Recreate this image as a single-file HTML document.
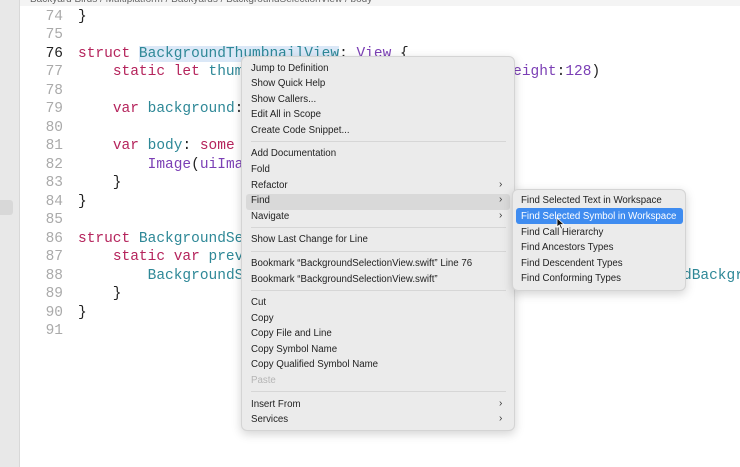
<!DOCTYPE html>
<html><head><meta charset="utf-8"><style>
*{margin:0;padding:0;box-sizing:border-box}
body{width:740px;height:467px;overflow:hidden;background:#fff;position:relative;font-family:"Liberation Sans",sans-serif}
.side{position:absolute;left:0;top:0;width:20px;height:467px;background:#e8e8e8;border-right:1px solid #d8d8d8}
.top{position:absolute;left:0;top:0;width:740px;height:6px;background:#f4f4f4;overflow:hidden}
.top span{position:absolute;top:-6px;font-size:10px;color:#666}
.ln{position:absolute;left:20px;width:43px;text-align:right;font-family:"Liberation Mono",monospace;font-size:14.5px;color:#aaa}
.cd{position:absolute;left:78px;font-family:"Liberation Mono",monospace;font-size:14.5px;color:#222;white-space:pre}
.k{color:#b5245c}.t{color:#2e8897}.p{color:#7b3fb5}
.sel{background:#dbe8f7}
.menu{position:absolute;background:#ebebeb;border:1px solid #d4d4d4;border-radius:6px;box-shadow:0 3px 10px rgba(0,0,0,.18)}
.mi{position:absolute;font-size:9.7px;color:#222;white-space:nowrap;line-height:14px}
.ar{position:absolute;font-size:10px;color:#333}
.sep{position:absolute;height:1px;background:#d6d6d6}
</style></head><body>
<div class="top"><span style="left:30px">Backyard Birds / Multiplatform / Backyards / BackgroundSelectionView / body</span></div>
<div class="side"><div style="position:absolute;left:0;top:200px;width:13px;height:15px;background:#d8d8d8;border-radius:0 3px 3px 0"></div></div>

<div class="ln" style="top:9px">74</div><div class="cd" style="top:9px">}</div>
<div class="ln" style="top:27px">75</div>
<div class="ln" style="top:46px;color:#222">76</div><div class="cd" style="top:46px"><span class="k">struct</span> <span class="t sel">BackgroundThumbnailView</span>: <span class="p">View</span> {</div>
<div class="ln" style="top:64px">77</div><div class="cd" style="top:64px">    <span class="k">static let</span> <span class="t">thumbnailSize</span> = <span class="p">CGSize</span>(<span class="p">width</span>:<span class="p">128</span>, <span class="p">height</span>:<span class="p">128</span>)</div>
<div class="ln" style="top:83px">78</div>
<div class="ln" style="top:101px">79</div><div class="cd" style="top:101px">    <span class="k">var</span> <span class="t">background</span>: <span class="p">BackyardBackground</span></div>
<div class="ln" style="top:120px">80</div>
<div class="ln" style="top:138px">81</div><div class="cd" style="top:138px">    <span class="k">var</span> <span class="t">body</span>: <span class="k">some</span> <span class="p">View</span> {</div>
<div class="ln" style="top:157px">82</div><div class="cd" style="top:157px">        <span class="p">Image</span>(<span class="p">uiImage</span>: background)</div>
<div class="ln" style="top:175px">83</div><div class="cd" style="top:175px">    }</div>
<div class="ln" style="top:194px">84</div><div class="cd" style="top:194px">}</div>
<div class="ln" style="top:212px">85</div>
<div class="ln" style="top:231px">86</div><div class="cd" style="top:231px"><span class="k">struct</span> <span class="t">BackgroundSelectionView_Previews</span></div>
<div class="ln" style="top:249px">87</div><div class="cd" style="top:249px">    <span class="k">static var</span> <span class="t">previews</span>: <span class="k">some</span> <span class="p">View</span> {</div>
<div class="ln" style="top:268px">88</div><div class="cd" style="top:268px">        <span class="t">BackgroundSelectionView</span>(selection: .constant(.selecte</div>
<div class="cd" style="top:268px;left:683px"><span class="t">dBackground</span>))</div>
<div class="ln" style="top:286px">89</div><div class="cd" style="top:286px">    }</div>
<div class="ln" style="top:305px">90</div><div class="cd" style="top:305px">}</div>
<div class="ln" style="top:323px">91</div>

<div class="menu" style="left:241px;top:56px;width:274px;height:375px">
<div style="position:absolute;left:4px;top:137px;width:264px;height:16px;background:#d9d9d9;border-radius:3px"></div>
<div class="mi" style="left:9px;top:5px">Jump to Definition</div>
<div class="mi" style="left:9px;top:20px">Show Quick Help</div>
<div class="mi" style="left:9px;top:36px">Show Callers...</div>
<div class="mi" style="left:9px;top:51px">Edit All in Scope</div>
<div class="mi" style="left:9px;top:67px">Create Code Snippet...</div>
<div class="sep" style="left:9px;top:84px;width:255px"></div>
<div class="mi" style="left:9px;top:90px">Add Documentation</div>
<div class="mi" style="left:9px;top:106px">Fold</div>
<div class="mi" style="left:9px;top:122px">Refactor</div><div class="ar" style="left:257px;top:122px">›</div>
<div class="mi" style="left:9px;top:137px">Find</div><div class="ar" style="left:257px;top:137px">›</div>
<div class="mi" style="left:9px;top:153px">Navigate</div><div class="ar" style="left:257px;top:153px">›</div>
<div class="sep" style="left:9px;top:170px;width:255px"></div>
<div class="mi" style="left:9px;top:176px">Show Last Change for Line</div>
<div class="sep" style="left:9px;top:194px;width:255px"></div>
<div class="mi" style="left:9px;top:200px">Bookmark “BackgroundSelectionView.swift” Line 76</div>
<div class="mi" style="left:9px;top:216px">Bookmark “BackgroundSelectionView.swift”</div>
<div class="sep" style="left:9px;top:233px;width:255px"></div>
<div class="mi" style="left:9px;top:239px">Cut</div>
<div class="mi" style="left:9px;top:255px">Copy</div>
<div class="mi" style="left:9px;top:270px">Copy File and Line</div>
<div class="mi" style="left:9px;top:286px">Copy Symbol Name</div>
<div class="mi" style="left:9px;top:301px">Copy Qualified Symbol Name</div>
<div class="mi" style="left:9px;top:317px;color:#b5b5b5">Paste</div>
<div class="sep" style="left:9px;top:334px;width:255px"></div>
<div class="mi" style="left:9px;top:341px">Insert From</div><div class="ar" style="left:257px;top:341px">›</div>
<div class="mi" style="left:9px;top:356px">Services</div><div class="ar" style="left:257px;top:356px">›</div>
</div>

<div class="menu" style="left:512px;top:189px;width:174px;height:102px">
<div style="position:absolute;left:3px;top:18px;width:167px;height:16px;background:#3f8cf0;border-radius:3px"></div>
<div class="mi" style="left:8px;top:4px">Find Selected Text in Workspace</div>
<div class="mi" style="left:8px;top:20px;color:#fff">Find Selected Symbol in Workspace</div>
<div class="mi" style="left:8px;top:36px">Find Call Hierarchy</div>
<div class="mi" style="left:8px;top:51px">Find Ancestors Types</div>
<div class="mi" style="left:8px;top:67px">Find Descendent Types</div>
<div class="mi" style="left:8px;top:82px">Find Conforming Types</div>
</div>
<svg style="position:absolute;left:556px;top:217px" width="9" height="13" viewBox="0 0 9 13"><path d="M1 1 L1 10 L3.3 8 L5 12 L6.5 11.3 L4.8 7.5 L8 7.5 Z" fill="#111" stroke="#fff" stroke-width="0.8"/></svg>
</body></html>
